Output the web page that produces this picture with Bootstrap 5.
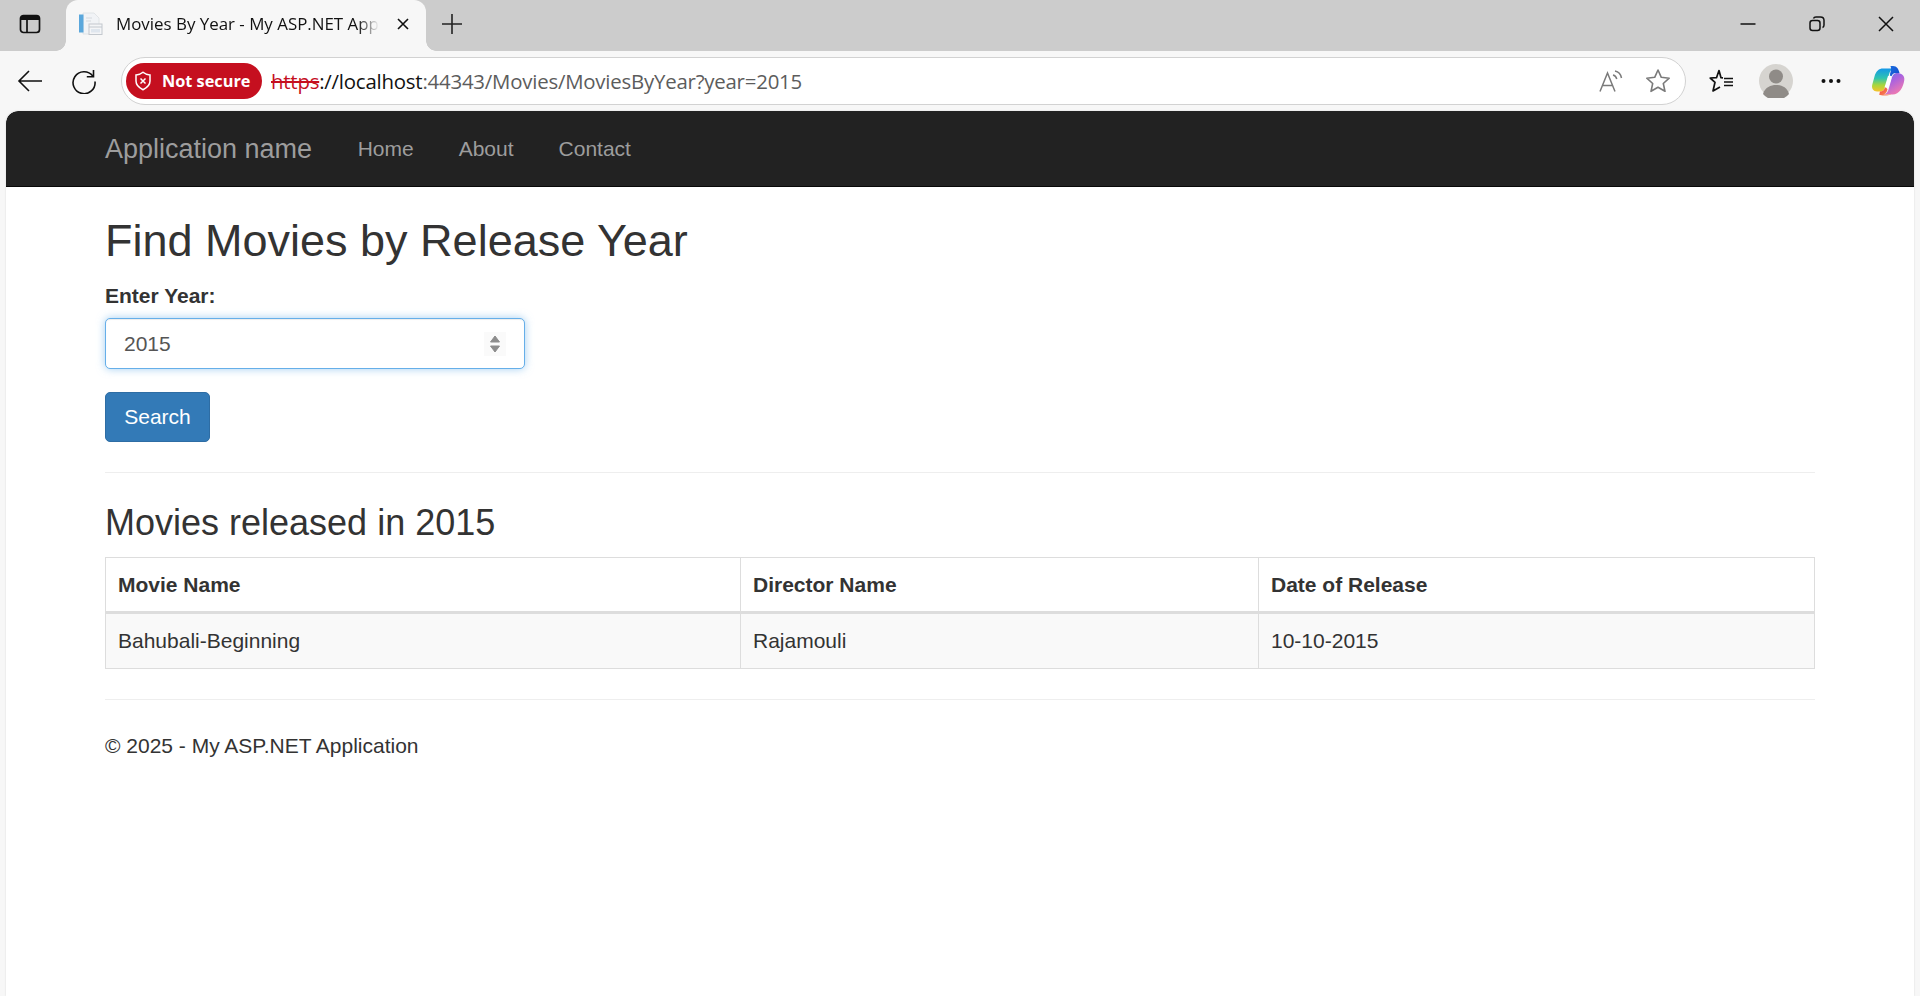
<!DOCTYPE html>
<html lang="en">
<head>
<meta charset="utf-8">
<title>Movies By Year - My ASP.NET Application</title>
<link href="https://cdn.jsdelivr.net/npm/bootstrap@5.3.0/dist/css/bootstrap.min.css" rel="stylesheet">
<style>
html,body{height:100%;overflow:hidden}
body{background:#f7f7f7;font-family:"Liberation Sans",Arial,sans-serif;font-size:21px;color:#333;line-height:1.4}
.shell{height:100vh}
.tabstrip{height:51px;background:#ccc;flex:none;padding-bottom:3px}
.strip-btn{width:60px;height:48px;margin-right:6px}
.tab-item{width:360px;height:51px;margin-bottom:-3px;padding-bottom:3px;background:#f7f7f7;border-radius:12px 12px 0 0;padding-left:12px;padding-right:16px;font-family:"Open Sans","Noto Sans",sans-serif;color:#111;position:relative}
.tab-item::before,.tab-item::after{content:"";position:absolute;bottom:0;width:10px;height:10px;background:radial-gradient(circle at 0 0,#ccc 9.5px,#f7f7f7 10px)}
.tab-item::before{left:-10px}
.tab-item::after{right:-10px;background:radial-gradient(circle at 100% 0,#ccc 9.5px,#f7f7f7 10px)}
.tab-title{white-space:nowrap;margin-left:13px;font-size:16.9px;-webkit-mask-image:linear-gradient(90deg,#000 92%,transparent);mask-image:linear-gradient(90deg,#000 92%,transparent)}
.plus-btn{margin-left:14px}
.win-btn{width:69px;height:48px}
.toolbar{height:60px;flex:none;background:#f7f7f7}
.tool-btn{width:54px;height:60px;flex:none}
.nav-tools{padding-left:3px}
.addr{width:1565px;height:48px;margin-left:10px;background:#fff;border:1.5px solid #d2d2d2;border-radius:24px;padding:0 14px 0 4px;flex:none}
.secure-pill{height:36px;width:136px;background:#c50f1f;color:#fff;border-radius:18px;font:700 16.3px "Open Sans","Noto Sans",sans-serif;padding-left:8px;gap:10px;flex:none}
.url-line{font:20.4px "Open Sans","Noto Sans",sans-serif;color:#5c5c5c;margin-left:9px;white-space:nowrap;letter-spacing:-.21px}
.url-strike{color:#c50f1f;text-decoration:line-through}
.url-host{color:#111}
.addr-icons{margin-left:auto;gap:22px}
.right-tools{width:228px;flex:none}
.tb-fav{margin-left:23px}
.tb-avatar{margin-left:24px}
.tb-dots{margin-left:28px}
.tb-copilot{margin-left:30px}
.pagebox{flex:1;margin:0 6px;background:#fff;border-radius:12px 12px 0 0;overflow:hidden;min-height:0;box-shadow:0 0 2px rgba(0,0,0,.14)}
.navbar.appbar{background:#222;height:76px;border-bottom:1px solid #080808;padding:2px 99px 0;border-radius:12px 12px 0 0;justify-content:flex-start}
.appbar .navbar-brand{color:#9d9d9d;font-size:27px;padding:0;margin:0;line-height:1}
.navbar-expand.appbar .navbar-nav .nav-link{color:#9d9d9d;font-size:21px;padding:0 22.5px;line-height:1}
.appbar .navbar-nav{margin:-2px 0 0 23px}
.page-main{padding:29px 99px 0}
.page-title{font-size:45px;line-height:49.5px;font-weight:400;margin:0 0 15px;color:#333}
.year-label{font-weight:700;font-size:21px;line-height:29px;margin:0 0 8px;display:block}
.year-input.form-control{width:420px;height:51px;border:1px solid #66afe9;border-radius:5px;box-shadow:inset 0 1px 1px rgba(0,0,0,.075),0 0 8px rgba(102,175,233,.6);color:#555;font-size:21px;padding:1px 18px 0;margin-bottom:23px}
.spin{background:#fafafa;width:22px;height:24px}
.btn.go-btn{background:#337ab7;border:1px solid #2e6da4;color:#fff;border-radius:5px;font-size:21px;width:105px;height:50px;padding:0;display:block}
.rule{border:0;border-top:1px solid #eee;opacity:1;margin:30px 0 0;height:0}
.sub-title{font-size:36px;line-height:41px;font-weight:400;margin:29px 0 14px;color:#333}
.table.movies{margin:0;table-layout:fixed;border-color:#ddd;color:#333;--bs-table-color:#333;--bs-table-bg:transparent;border-collapse:collapse}
.movies th,.movies td{padding:1px 12px 0;font-size:21px;vertical-align:middle;border:1.5px solid #ddd}
.movies thead th{height:55px;border-bottom:3px solid #ddd;font-weight:700}
.movies tbody td{height:56px;background:#f9f9f9;box-shadow:none;font-weight:400}
.c1{width:635px}.c2{width:518px}
.foot-rule{margin:30px 0 0}
.foot-text{margin:32px 0 0;font-size:21px;line-height:28px}
</style>
</head>
<body>
<div class="shell d-flex flex-column">
  <div class="tabstrip d-flex align-items-center">
    <div class="strip-btn d-flex align-items-center justify-content-center">
      <svg width="24" height="24" viewBox="0 0 24 24" fill="none" stroke="#111" stroke-width="1.7"><rect x="2.5" y="3.500" width="19" height="17" rx="3"/><path d="M9 8v12.500"/><rect x="3" y="4" width="18" height="4" fill="#111" stroke="none"/></svg>
    </div>
    <div class="tab-item d-flex align-items-center">
      <svg width="25" height="24" viewBox="0 0 25 24"><path d="M5 1h11l5 5v16H5z" fill="#f1f3f6" stroke="#dcdfe3" stroke-width=".8"/><rect x="1" y="2.500" width="4.500" height="18" fill="#5aa7dc"/><path d="M8 6h6M8 9h5" stroke="#d5d9de"/><rect x="11" y="12" width="13" height="10.500" fill="#f4f5f7" stroke="#c3c8ce"/><path d="M11 15h13" stroke="#c3c8ce"/><rect x="13" y="17" width="9" height="3.500" fill="#dfe6ee"/></svg>
      <div class="tab-title">Movies By Year - My ASP.NET App</div>
      <svg class="ms-auto" width="14" height="14" viewBox="0 0 14 14" stroke="#111" stroke-width="1.600"><path d="M2 2l10 10M12 2L2 12"/></svg>
    </div>
    <svg class="plus-btn" width="24" height="24" viewBox="0 0 24 24" stroke="#222" stroke-width="1.600"><path d="M12 2v20M2 12h20"/></svg>
    <div class="d-flex ms-auto">
      <div class="win-btn d-flex align-items-center justify-content-center"><svg width="16" height="16" viewBox="0 0 16 16" stroke="#111" stroke-width="1.500"><path d="M.5 8h15"/></svg></div>
      <div class="win-btn d-flex align-items-center justify-content-center"><svg width="16" height="16" viewBox="0 0 16 16" fill="none" stroke="#111" stroke-width="1.500"><rect x="1" y="4.500" width="10" height="10" rx="2.500"/><path d="M4.500 2.500Q5 1 7 1h4.500Q15 1 15 4.500V9q0 2-1.500 2.500"/></svg></div>
      <div class="win-btn d-flex align-items-center justify-content-center"><svg width="16" height="16" viewBox="0 0 16 16" stroke="#111" stroke-width="1.500"><path d="M1 1l14 14M15 1L1 15"/></svg></div>
    </div>
  </div>
  <div class="toolbar d-flex align-items-center">
    <div class="nav-tools d-flex">
      <div class="tool-btn d-flex align-items-center justify-content-center"><svg width="26" height="24" viewBox="0 0 26 24" fill="none" stroke="#111" stroke-width="1.600"><path d="M25 12H2M12 2L2 12l10 10"/></svg></div>
      <div class="tool-btn d-flex align-items-center justify-content-center"><svg width="26" height="26" viewBox="0 0 26 26" fill="none" stroke="#111" stroke-width="1.600"><path d="M21.800 8A11 11 0 1 0 24 13.500"/><path d="M22.500 2v6.700h-6.700"/></svg></div>
    </div>
    <div class="addr d-flex align-items-center">
      <div class="secure-pill d-flex align-items-center">
        <svg width="18" height="20" viewBox="0 0 18 20" fill="none" stroke="#fff" stroke-width="1.500"><path d="M9 1.300c2 1.700 4.500 2.600 7 2.700v6c0 4-3 6.800-7 8.700C5 16.800 2 14 2 10V4c2.500-.1 5-1 7-2.700z"/><path d="M6.500 7.500l5 5M11.500 7.500l-5 5"/></svg>
        <span>Not secure</span>
      </div>
      <div class="url-line"><span class="url-strike">https</span><span class="url-host">://localhost</span>:44343/Movies/MoviesByYear?year=2015</div>
      <div class="addr-icons d-flex align-items-center">
        <svg width="24" height="24" viewBox="0 0 24 24" fill="none" stroke="#7a7a7a" stroke-width="1.500"><path d="M1 22.500L8.500 4l7.500 18.500M3.500 16.500h10"/><path d="M14 6c2 .5 3.300 2 3.800 4M16 2c3.500.7 5.800 3.200 6.500 7"/></svg>
        <svg width="26" height="26" viewBox="0 0 26 26" fill="none" stroke="#7a7a7a" stroke-width="1.600"><path d="M13 2l3.300 7.300 7.900.9-5.900 5.300 1.700 7.800-7-4-7 4 1.700-7.800-5.900-5.300 7.900-.9z" stroke-linejoin="round"/></svg>
      </div>
    </div>
    <div class="right-tools d-flex align-items-center">
      <svg class="tb-fav" width="26" height="24" viewBox="0 0 26 24" fill="none" stroke="#111" stroke-width="1.700"><path d="M14 8.800l-2-.1L10 1.500 7.500 8.700 1.200 9 6 13.300 4 22l7-4" stroke-linejoin="round"/><path d="M15 9.500h9M15 13h9M15 16.500h9"/></svg>
      <svg class="tb-avatar" width="34" height="34" viewBox="0 0 34 34"><circle cx="17" cy="17" r="17" fill="#d6d4d0"/><circle cx="17" cy="12.500" r="7" fill="#8f8b87"/><path d="M4 30c2-7 8-9 13-9s11 2 13 9a17 17 0 0 1-26 0z" fill="#8f8b87"/></svg>
      <svg class="tb-dots" width="20" height="6" viewBox="0 0 20 6" fill="#111"><circle cx="2.500" cy="3" r="2"/><circle cx="10" cy="3" r="2"/><circle cx="17.500" cy="3" r="2"/></svg>
      <svg class="tb-copilot" width="34" height="32" viewBox="0 0 34 32"><defs><linearGradient id="g1" x1="0" y1="0" x2="0" y2="1"><stop offset="0" stop-color="#1497e8"/><stop offset=".42" stop-color="#2fc4b0"/><stop offset=".72" stop-color="#a8d63c"/><stop offset="1" stop-color="#f8c22a"/></linearGradient><linearGradient id="g2" x1="0" y1="0" x2=".6" y2="1"><stop offset="0" stop-color="#5a7be8"/><stop offset=".45" stop-color="#a862e0"/><stop offset="1" stop-color="#f07ab0"/></linearGradient><linearGradient id="g3" x1="0" y1="0" x2="1" y2="1"><stop offset="0" stop-color="#f2382e"/><stop offset="1" stop-color="#fba06a"/></linearGradient><linearGradient id="g4" x1="0" y1="0" x2="1" y2="1"><stop offset="0" stop-color="#1a6ee0"/><stop offset="1" stop-color="#1346c8"/></linearGradient></defs><path d="M12 3.500C8 3.500 5 6 3.500 11.500l-2.200 8C.2 23.500 2.500 26.500 6 26.500h3c3 0 4.500-2 5.500-5l3.500-12C19 6 20.500 3.500 23 3.500z" fill="url(#g1)"/><path d="M26 8c4 0 8 2.500 7.300 7-1 7-4.800 14.500-11.800 14.500H12c3 0 4.700-2.500 5.500-5l3.300-11.500C21.500 10.500 23 8 26 8z" fill="url(#g2)"/><path d="M19.500 1H22c4 0 5.500 3 6.500 7h-4c-2 0-3.500 1.500-4 3.500l-.8 2.500L19 9c1-3 1.500-6 .5-8z" fill="url(#g4)"/><path d="M9 26.500c3 0 4.700-2 5.500-5l2 3c-1 3.500-2.500 5-4.500 5H20c1 .5-9 2-12 0 1-1 .5-2 1-3z" fill="url(#g3)"/><path d="M17 11h4l-3.500 11.500h-4z" fill="#fff"/></svg>
    </div>
  </div>
  <div class="pagebox">
    <nav class="navbar navbar-expand appbar">
      <a class="navbar-brand" href="#">Application name</a>
      <ul class="navbar-nav">
        <li class="nav-item"><a class="nav-link" href="#">Home</a></li>
        <li class="nav-item"><a class="nav-link" href="#">About</a></li>
        <li class="nav-item"><a class="nav-link" href="#">Contact</a></li>
      </ul>
    </nav>
    <main class="page-main">
      <h1 class="page-title">Find Movies by Release Year</h1>
      <form>
        <label class="year-label">Enter Year:</label>
        <div class="year-input form-control d-flex align-items-center justify-content-between">
          <span>2015</span>
          <span class="spin d-flex align-items-center justify-content-center"><svg width="12" height="20" viewBox="0 0 12 20" fill="#8c8c8c" stroke="#8c8c8c" stroke-linejoin="round"><path d="M6 2l4.500 6h-9zM1.500 12h9L6 18z"/></svg></span>
        </div>
        <button type="button" class="btn go-btn">Search</button>
      </form>
      <hr class="rule">
      <h2 class="sub-title">Movies released in 2015</h2>
      <table class="table movies">
        <colgroup><col class="c1"><col class="c2"><col></colgroup>
        <thead><tr><th>Movie Name</th><th>Director Name</th><th>Date of Release</th></tr></thead>
        <tbody><tr><td>Bahubali-Beginning</td><td>Rajamouli</td><td>10-10-2015</td></tr></tbody>
      </table>
      <hr class="rule foot-rule">
      <footer><p class="foot-text">© 2025 - My ASP.NET Application</p></footer>
    </main>
  </div>
</div>
</body>
</html>
